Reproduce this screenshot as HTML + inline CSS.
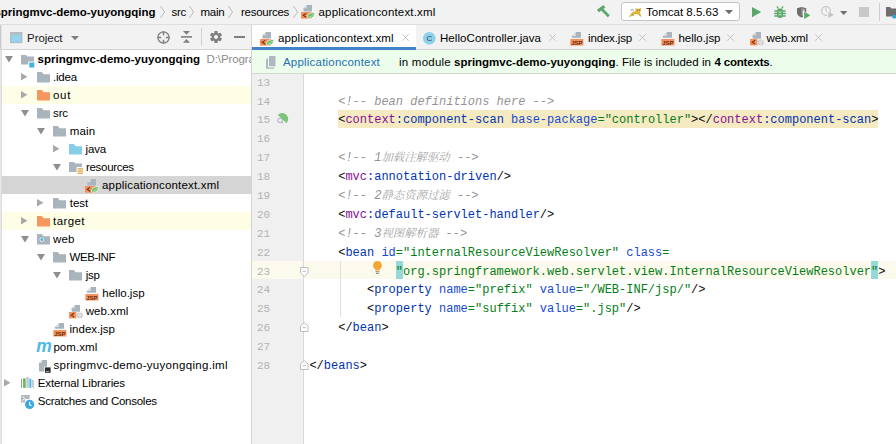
<!DOCTYPE html>
<html><head><meta charset="utf-8"><title>applicationcontext.xml</title>
<style>
*{box-sizing:border-box;margin:0;padding:0}
html,body{width:896px;height:444px;overflow:hidden;background:#fff}
body{font-family:"Liberation Sans","Noto Sans CJK SC",sans-serif;font-size:11.5px;color:#000;position:relative}
.a{position:absolute}
.t{position:absolute;white-space:nowrap;line-height:18px;height:18px}
svg{position:absolute;overflow:visible}
.code{font-family:"Liberation Mono","Noto Serif CJK SC",monospace;font-size:12px;line-height:18px;height:18px;white-space:pre;position:absolute;left:338.2px;color:#080808}
.ln{font-family:"Liberation Mono",monospace;font-size:11px;line-height:18px;height:18px;position:absolute;left:257px;color:#b3b3b3}
.c{color:#939393;font-style:italic}
.cj{font-size:11.4px;color:#a6a6a6}
.ns{color:#871094}
.tg{color:#0033b3}
.an{color:#174ad4}
.av{color:#067d17}
</style></head><body>
<div class="a" style="left:0px;top:0px;width:896px;height:24px;background:#f2f2f2;"></div>
<div class="a" style="left:0px;top:24px;width:896px;height:1px;background:#dedede;"></div>
<div class="a" style="left:0px;top:25px;width:251px;height:24px;background:#f2f2f2;"></div>
<div class="a" style="left:0px;top:49px;width:251px;height:1px;background:#d4d4d4;"></div>
<div class="a" style="left:0px;top:50px;width:251px;height:394px;background:#fff;"></div>
<div class="a" style="left:252px;top:25px;width:644px;height:25px;background:#f2f2f2;"></div>
<div class="a" style="left:252px;top:25px;width:164px;height:25px;background:#fff;"></div>
<div class="a" style="left:252px;top:47px;width:164px;height:3px;background:#4083c9;"></div>
<div class="a" style="left:416px;top:49px;width:480px;height:1px;background:#d2d2d2;"></div>
<div class="a" style="left:252px;top:50px;width:644px;height:23px;background:#edfdec;"></div>
<div class="a" style="left:252px;top:73px;width:644px;height:1px;background:#d6d6d6;"></div>
<div class="a" style="left:252px;top:74px;width:51px;height:370px;background:#f0f0f0;"></div>
<div class="a" style="left:303px;top:74px;width:1px;height:370px;background:#d9d9d9;"></div>
<div class="a" style="left:2px;top:86px;width:249px;height:18px;background:#fdfee5;"></div>
<div class="a" style="left:2px;top:212px;width:249px;height:18px;background:#fdfee5;"></div>
<div class="a" style="left:2px;top:176px;width:249px;height:18px;background:#d5d5d5;"></div>
<div class="a" style="left:0px;top:25px;width:1px;height:25px;background:#c9c9c9;"></div>
<div class="a" style="left:1px;top:25px;width:1px;height:25px;background:#e4e4e4;"></div>
<div class="a" style="left:0px;top:50px;width:1px;height:394px;background:#e7e7e7;"></div>
<div class="a" style="left:1px;top:50px;width:1px;height:394px;background:#dddddd;"></div>
<div class="a" style="left:251px;top:25px;width:1px;height:419px;background:#d4d4d4;"></div>
<div class="a" style="left:621.3px;top:2.3px;width:118.4px;height:19px;background:#fff;border:1px solid #c4c4c4;border-radius:3px"></div>
<div class="a" style="left:252px;top:260.6px;width:644px;height:18.9px;background:#fcfaed;"></div>
<div class="a" style="left:303px;top:260.6px;width:1px;height:18.9px;background:#d9d9d9;"></div>
<div class="a" style="left:338.2px;top:109.5px;width:540px;height:18.9px;background:#f5eac1;"></div>
<div class="a" style="left:395.6px;top:260.6px;width:7.3px;height:18.9px;background:#96d9d9;"></div>
<div class="a" style="left:870.8px;top:260.6px;width:7.3px;height:18.9px;background:#96d9d9;"></div>
<div class="a" style="left:340px;top:260.6px;width:1px;height:56.7px;background:#dedede;"></div>
<div class="t" style="left:-5.5px;top:2.5px;color:#000;letter-spacing:-0.026px;font-weight:bold;">springmvc-demo-yuyongqing</div>
<div class="t" style="left:171.5px;top:2.5px;color:#000;letter-spacing:-0.281px;">src</div>
<div class="t" style="left:200.5px;top:2.5px;color:#000;letter-spacing:-0.234px;">main</div>
<div class="t" style="left:241px;top:2.5px;color:#000;letter-spacing:-0.278px;">resources</div>
<div class="t" style="left:318.5px;top:2.5px;color:#000;letter-spacing:0.175px;">applicationcontext.xml</div>
<div class="t" style="left:646px;top:2.5px;color:#000;letter-spacing:0.005px;">Tomcat 8.5.63</div>
<div class="t" style="left:27px;top:28.5px;color:#1a1a1a;letter-spacing:-0.042px;">Project</div>
<div class="t" style="left:278px;top:28.5px;color:#000;letter-spacing:0.118px;">applicationcontext.xml</div>
<div class="t" style="left:440px;top:28.5px;color:#000;letter-spacing:0.064px;">HelloController.java</div>
<div class="t" style="left:588px;top:28.5px;color:#000;letter-spacing:-0.155px;">index.jsp</div>
<div class="t" style="left:678.5px;top:28.5px;color:#000;letter-spacing:-0.023px;">hello.jsp</div>
<div class="t" style="left:766.5px;top:28.5px;color:#000;letter-spacing:-0.098px;">web.xml</div>
<div class="t" style="left:283px;top:52.5px;color:#2470b3;letter-spacing:0.203px;">Applicationcontext</div>
<div class="t" style="left:399px;top:52.5px;color:#000;letter-spacing:0.236px;">in module</div>
<div class="t" style="left:454px;top:52.5px;color:#000;letter-spacing:-0.006px;font-weight:bold;">springmvc-demo-yuyongqing</div>
<div class="t" style="left:615.5px;top:52.5px;color:#000;letter-spacing:0.042px;">. File is included in</div>
<div class="t" style="left:714.5px;top:52.5px;color:#000;letter-spacing:-0.189px;font-weight:bold;">4 contexts</div>
<div class="t" style="left:769.5px;top:52.5px;color:#000;letter-spacing:0.297px;">.</div>
<div class="t" style="left:37.5px;top:49.5px;color:#000;letter-spacing:0.034px;font-weight:bold;">springmvc-demo-yuyongqing</div>
<div class="t" style="left:206.5px;top:49.5px;color:#8c8c8c;letter-spacing:-0.095px;width:44.5px;overflow:hidden;">D:\Programs</div>
<div class="t" style="left:53px;top:67.5px;color:#000;letter-spacing:-0.188px;">.idea</div>
<div class="t" style="left:53px;top:85.5px;color:#000;letter-spacing:0.667px;">out</div>
<div class="t" style="left:53px;top:103.5px;color:#000;letter-spacing:-0.115px;">src</div>
<div class="t" style="left:69.7px;top:121.5px;color:#000;letter-spacing:0.141px;">main</div>
<div class="t" style="left:85.5px;top:139.5px;color:#000;letter-spacing:-0.152px;">java</div>
<div class="t" style="left:86px;top:157.5px;color:#000;letter-spacing:-0.311px;">resources</div>
<div class="t" style="left:102px;top:175.5px;color:#000;letter-spacing:0.184px;">applicationcontext.xml</div>
<div class="t" style="left:69.7px;top:193.5px;color:#000;letter-spacing:0.013px;">test</div>
<div class="t" style="left:53px;top:211.5px;color:#000;letter-spacing:0.43px;">target</div>
<div class="t" style="left:53px;top:229.5px;color:#000;letter-spacing:0.164px;">web</div>
<div class="t" style="left:69.5px;top:247.5px;color:#000;letter-spacing:-0.438px;">WEB-INF</div>
<div class="t" style="left:85.7px;top:265.5px;color:#000;letter-spacing:-0.201px;">jsp</div>
<div class="t" style="left:102.3px;top:283.5px;color:#000;letter-spacing:0.011px;">hello.jsp</div>
<div class="t" style="left:85.7px;top:301.5px;color:#000;letter-spacing:0.087px;">web.xml</div>
<div class="t" style="left:69.5px;top:319.5px;color:#000;letter-spacing:0.012px;">index.jsp</div>
<div class="t" style="left:53.4px;top:337.5px;color:#000;letter-spacing:0.064px;">pom.xml</div>
<div class="t" style="left:53.4px;top:355.5px;color:#000;letter-spacing:0.305px;">springmvc-demo-yuyongqing.iml</div>
<div class="t" style="left:37.8px;top:373.5px;color:#000;letter-spacing:-0.127px;">External Libraries</div>
<div class="t" style="left:37.8px;top:391.5px;color:#000;letter-spacing:-0.257px;">Scratches and Consoles</div>
<svg style="left:159px;top:5px" width="7" height="14" viewBox="0 0 7 14"><path d="M1.5 1 L5.5 7 L1.5 13" fill="none" stroke="#bcbcbc" stroke-width="1"/></svg>
<svg style="left:188px;top:5px" width="7" height="14" viewBox="0 0 7 14"><path d="M1.5 1 L5.5 7 L1.5 13" fill="none" stroke="#bcbcbc" stroke-width="1"/></svg>
<svg style="left:227px;top:5px" width="7" height="14" viewBox="0 0 7 14"><path d="M1.5 1 L5.5 7 L1.5 13" fill="none" stroke="#bcbcbc" stroke-width="1"/></svg>
<svg style="left:291.5px;top:5px" width="7" height="14" viewBox="0 0 7 14"><path d="M1.5 1 L5.5 7 L1.5 13" fill="none" stroke="#bcbcbc" stroke-width="1"/></svg>
<svg style="left:4.5px;top:55.5px" width="8" height="6.5" viewBox="0 0 8 6.5"><path d="M0 0H8L4 6.5Z" fill="#8f8f8f"/></svg>
<svg style="left:20.8px;top:54.5px" width="14" height="13" viewBox="0 0 14 13"><path d="M0 0H5L6.5 1.5H13V6.5H7.3V9.5H0Z" fill="#a9b4bc"/><rect x="8.3" y="7.5" width="5" height="5" fill="#3fb3e3"/></svg>
<svg style="left:20.8px;top:73.3px" width="6.5" height="7.4" viewBox="0 0 6.5 7.4"><path d="M0 0L6.5 3.7L0 7.4Z" fill="#a8a8a8"/></svg>
<svg style="left:36.8px;top:71.80000000000001px" width="13" height="10.6" viewBox="0 0 13 10.6"><path d="M0 0H4.8L6.6 2.2H13V10.6H0Z" fill="#a9b4bc"/></svg>
<svg style="left:20.8px;top:91.3px" width="6.5" height="7.4" viewBox="0 0 6.5 7.4"><path d="M0 0L6.5 3.7L0 7.4Z" fill="#a8a8a8"/></svg>
<svg style="left:36.8px;top:89.80000000000001px" width="13" height="10.6" viewBox="0 0 13 10.6"><path d="M0 0H4.8L6.6 2.2H13V10.6H0Z" fill="#f5975f"/></svg>
<svg style="left:20.5px;top:109.5px" width="8" height="6.5" viewBox="0 0 8 6.5"><path d="M0 0H8L4 6.5Z" fill="#8f8f8f"/></svg>
<svg style="left:36.8px;top:107.80000000000001px" width="13" height="10.6" viewBox="0 0 13 10.6"><path d="M0 0H4.8L6.6 2.2H13V10.6H0Z" fill="#a9b4bc"/></svg>
<svg style="left:37px;top:127.5px" width="8" height="6.5" viewBox="0 0 8 6.5"><path d="M0 0H8L4 6.5Z" fill="#8f8f8f"/></svg>
<svg style="left:53px;top:125.80000000000001px" width="13" height="10.6" viewBox="0 0 13 10.6"><path d="M0 0H4.8L6.6 2.2H13V10.6H0Z" fill="#a9b4bc"/></svg>
<svg style="left:53.3px;top:145.3px" width="6.5" height="7.4" viewBox="0 0 6.5 7.4"><path d="M0 0L6.5 3.7L0 7.4Z" fill="#a8a8a8"/></svg>
<svg style="left:69px;top:143.6px" width="13" height="10.6" viewBox="0 0 13 10.6"><path d="M0 0H4.8L6.6 2.2H13V10.6H0Z" fill="#85cde9"/></svg>
<svg style="left:53px;top:163.5px" width="8" height="6.5" viewBox="0 0 8 6.5"><path d="M0 0H8L4 6.5Z" fill="#8f8f8f"/></svg>
<svg style="left:69px;top:162.4px" width="15" height="13" viewBox="0 0 15 13"><path d="M0 0H5L6.5 1.5H13V5H7.5V10H0Z" fill="#a9b4bc"/><rect x="8.5" y="6.2" width="5.6" height="1.4" fill="#e2a94c"/><rect x="8.5" y="8.4" width="5.6" height="1.4" fill="#e2a94c"/><rect x="8.5" y="10.6" width="5.6" height="1.4" fill="#e2a94c"/></svg>
<svg style="left:37.3px;top:199.3px" width="6.5" height="7.4" viewBox="0 0 6.5 7.4"><path d="M0 0L6.5 3.7L0 7.4Z" fill="#a8a8a8"/></svg>
<svg style="left:53px;top:197.8px" width="13" height="10.6" viewBox="0 0 13 10.6"><path d="M0 0H4.8L6.6 2.2H13V10.6H0Z" fill="#a9b4bc"/></svg>
<svg style="left:20.8px;top:217.3px" width="6.5" height="7.4" viewBox="0 0 6.5 7.4"><path d="M0 0L6.5 3.7L0 7.4Z" fill="#a8a8a8"/></svg>
<svg style="left:36.8px;top:215.8px" width="13" height="10.6" viewBox="0 0 13 10.6"><path d="M0 0H4.8L6.6 2.2H13V10.6H0Z" fill="#f5975f"/></svg>
<svg style="left:20.5px;top:235.5px" width="8" height="6.5" viewBox="0 0 8 6.5"><path d="M0 0H8L4 6.5Z" fill="#8f8f8f"/></svg>
<svg style="left:36.8px;top:233.8px" width="13" height="10.6" viewBox="0 0 13 10.6"><path d="M0 0H4.8L6.6 2.2H13V10.6H0Z" fill="#a9b4bc"/><circle cx="4.8" cy="5.6" r="2.2" fill="#fff"/><circle cx="4.8" cy="5.6" r="1.5" fill="#3fb3e3"/></svg>
<svg style="left:37px;top:253.5px" width="8" height="6.5" viewBox="0 0 8 6.5"><path d="M0 0H8L4 6.5Z" fill="#8f8f8f"/></svg>
<svg style="left:53px;top:251.8px" width="13" height="10.6" viewBox="0 0 13 10.6"><path d="M0 0H4.8L6.6 2.2H13V10.6H0Z" fill="#a9b4bc"/></svg>
<svg style="left:53px;top:271.5px" width="8" height="6.5" viewBox="0 0 8 6.5"><path d="M0 0H8L4 6.5Z" fill="#8f8f8f"/></svg>
<svg style="left:69px;top:269.79999999999995px" width="13" height="10.6" viewBox="0 0 13 10.6"><path d="M0 0H4.8L6.6 2.2H13V10.6H0Z" fill="#a9b4bc"/></svg>
<svg style="left:85.4px;top:179.3px" width="14" height="14" viewBox="0 0 14 14"><path d="M5.7 0H11V6.6H2.5V3.2Z" fill="#a9b4bc"/><path d="M2.5 3.2L5.7 0V3.2Z" fill="#fff" opacity=".55"/><path d="M2.5 3.2L5.7 0V3.2Z" fill="#a9b4bc" opacity=".0"/><rect x="0" y="7" width="10.6" height="6.6" fill="#f4915c"/><path d="M5.2 8.4L2.2 10.3L5.2 12.2" fill="none" stroke="#7a2a12" stroke-width="1.1"/><path d="M6.5 12.5C6 9.4 8.6 7.7 13.5 7.5C13.8 11.2 11.2 14 7.5 13.2Z" fill="#6cc067" stroke="#fff" stroke-width=".7"/><path d="M8 12C9.6 11.8 11.2 10.8 12.2 9.2" fill="none" stroke="#c9ecc4" stroke-width=".8"/></svg>
<svg style="left:85px;top:286.8px" width="14" height="13.5" viewBox="0 0 14 13.5"><path d="M5.9 0H11V5.7H1.9V4Z" fill="#a9b4bc"/><path d="M1.9 4L5.9 0V4Z" fill="#fff" opacity=".55"/><path d="M1.9 4L5.9 0V4Z" fill="#a9b4bc" opacity=".0"/><rect x="0.4" y="7" width="13" height="6.5" fill="#f4915c"/><text x="6.9" y="12.6" font-family="Liberation Sans,sans-serif" font-weight="bold" font-size="6" text-anchor="middle" fill="#6b2a10" textLength="11.4" lengthAdjust="spacingAndGlyphs">JSP</text></svg>
<svg style="left:69px;top:305.2px" width="14" height="14" viewBox="0 0 14 14"><path d="M5.9 0H11V6.8H2.7V3.2Z" fill="#a9b4bc"/><path d="M2.7 3.2L5.9 0V3.2Z" fill="#fff" opacity=".55"/><path d="M2.7 3.2L5.9 0V3.2Z" fill="#a9b4bc" opacity=".0"/><rect x="0" y="7" width="7.4" height="6.4" fill="#f4915c"/><path d="M5.2 8.3L2.2 10.2L5.2 12.1" fill="none" stroke="#7a2a12" stroke-width="1.1"/><circle cx="10.8" cy="10.4" r="2.9" fill="#b9c2c9"/><path d="M8.6 10.4H13M10.8 7.8V13" stroke="#e8ecef" stroke-width=".8" fill="none"/><ellipse cx="10.8" cy="10.4" rx="1.3" ry="2.7" fill="none" stroke="#e8ecef" stroke-width=".7"/></svg>
<svg style="left:53px;top:322.9px" width="14" height="13.5" viewBox="0 0 14 13.5"><path d="M5.9 0H11V5.7H1.9V4Z" fill="#a9b4bc"/><path d="M1.9 4L5.9 0V4Z" fill="#fff" opacity=".55"/><path d="M1.9 4L5.9 0V4Z" fill="#a9b4bc" opacity=".0"/><rect x="0.4" y="7" width="13" height="6.5" fill="#f4915c"/><text x="6.9" y="12.6" font-family="Liberation Sans,sans-serif" font-weight="bold" font-size="6" text-anchor="middle" fill="#6b2a10" textLength="11.4" lengthAdjust="spacingAndGlyphs">JSP</text></svg>
<div class="a" style="left:36.3px;top:337px;font:italic bold 17.5px/18px 'Liberation Sans',sans-serif;color:#4fb9e4;letter-spacing:-1px">m</div>
<svg style="left:39px;top:359.6px" width="12" height="13" viewBox="0 0 12 13"><path d="M3 0H8V11.4H0V3Z" fill="#a9b4bc"/><path d="M0 3L3 0V3Z" fill="#fff" opacity=".55"/><path d="M0 3L3 0V3Z" fill="#a9b4bc" opacity=".0"/><rect x="5.3" y="6.7" width="6.7" height="6.3" fill="#fff"/><rect x="6" y="7.4" width="5.6" height="5.4" fill="#2b2b2b"/><rect x="7" y="11" width="3" height=".9" fill="#bbb"/></svg>
<svg style="left:4px;top:379.3px" width="6.5" height="7.4" viewBox="0 0 6.5 7.4"><path d="M0 0L6.5 3.7L0 7.4Z" fill="#a8a8a8"/></svg>
<svg style="left:20.6px;top:377px" width="13" height="11" viewBox="0 0 13 11"><rect x="0" y="1.8" width="1" height="9" fill="#8f9aa3"/><rect x="2.1" y="1.4" width="2.5" height="9.4" fill="#62b543"/><rect x="5.4" y="0" width="2.3" height="10.8" fill="#bcc5cb"/><rect x="8.3" y="1.8" width="2.1" height="9" fill="#4db8e6"/><rect x="11.5" y="3" width="1" height="7.8" fill="#8f9aa3"/></svg>
<svg style="left:20.8px;top:395.2px" width="14" height="14" viewBox="0 0 14 14"><path d="M0 0H8.6V4H4V7.4H0Z" fill="#b0b9c0"/><path d="M1.4 1.4L3.8 3.5L1.4 5.6" fill="none" stroke="#fff" stroke-width="1"/><circle cx="8.6" cy="9.4" r="4.6" fill="#3ea8de"/><path d="M8.6 6.8V9.6L10.4 10.8" fill="none" stroke="#fff" stroke-width="1.1"/></svg>
<svg style="left:10px;top:32px" width="12.4" height="11.2" viewBox="0 0 12.4 11.2"><rect x="0" y="0" width="12.4" height="11.2" fill="#b3bdc5"/><rect x="1.5" y="3.2" width="9.4" height="6.6" fill="#93d4ee"/></svg>
<svg style="left:70.8px;top:36.4px" width="8" height="4.2" viewBox="0 0 8 4.2"><path d="M0 0H8L4 4.2Z" fill="#7f7f7f"/></svg>
<svg style="left:156.6px;top:30.6px" width="13" height="13" viewBox="0 0 13 13"><circle cx="6.5" cy="6.5" r="5.6" fill="none" stroke="#7f7f7f" stroke-width="1.3"/><path d="M6.5 0.5V4.2M6.5 8.8V12.5M0.5 6.5H4.2M8.8 6.5H12.5" stroke="#7f7f7f" stroke-width="1.6"/></svg>
<svg style="left:181px;top:31.2px" width="11" height="11.8" viewBox="0 0 11 11.8"><rect x="0" y="5.1" width="11" height="1.6" fill="#7f7f7f"/><path d="M2 0H9L5.5 3.8Z" fill="#7f7f7f"/><path d="M2 11.8H9L5.5 8Z" fill="#7f7f7f"/></svg>
<div class="a" style="left:201px;top:28px;width:1px;height:18px;background:#d1d1d1"></div>
<svg style="left:210px;top:31px" width="12" height="12" viewBox="0 0 12 12"><g transform="translate(6 6)" fill="#7f7f7f"><rect x="-1.6" y="-6" width="3.2" height="12" rx=".5" transform="rotate(0)"/><rect x="-1.6" y="-6" width="3.2" height="12" rx=".5" transform="rotate(60)"/><rect x="-1.6" y="-6" width="3.2" height="12" rx=".5" transform="rotate(120)"/><circle r="4.2"/><circle r="2.1" fill="#f2f2f2"/></g></svg>
<div class="a" style="left:233.7px;top:36.2px;width:11px;height:1.8px;background:#7f7f7f"></div>
<svg style="left:260px;top:31.8px" width="14" height="14" viewBox="0 0 14 14"><path d="M5.7 0H11V6.6H2.5V3.2Z" fill="#a9b4bc"/><path d="M2.5 3.2L5.7 0V3.2Z" fill="#fff" opacity=".55"/><path d="M2.5 3.2L5.7 0V3.2Z" fill="#a9b4bc" opacity=".0"/><rect x="0" y="7" width="10.6" height="6.6" fill="#f4915c"/><path d="M5.2 8.4L2.2 10.3L5.2 12.2" fill="none" stroke="#7a2a12" stroke-width="1.1"/><path d="M6.5 12.5C6 9.4 8.6 7.7 13.5 7.5C13.8 11.2 11.2 14 7.5 13.2Z" fill="#6cc067" stroke="#fff" stroke-width=".7"/><path d="M8 12C9.6 11.8 11.2 10.8 12.2 9.2" fill="none" stroke="#c9ecc4" stroke-width=".8"/></svg>
<svg style="left:423px;top:32px" width="12.6" height="12.6" viewBox="0 0 12.6 12.6"><circle cx="6.3" cy="6.3" r="6.3" fill="#8fd1ec"/><text x="6.3" y="9.2" font-family="Liberation Sans,sans-serif" font-size="8" text-anchor="middle" fill="#2b4a57">C</text></svg>
<svg style="left:569.5px;top:31.8px" width="14" height="13.5" viewBox="0 0 14 13.5"><path d="M5.9 0H11V5.7H1.9V4Z" fill="#a9b4bc"/><path d="M1.9 4L5.9 0V4Z" fill="#fff" opacity=".55"/><path d="M1.9 4L5.9 0V4Z" fill="#a9b4bc" opacity=".0"/><rect x="0.4" y="7" width="13" height="6.5" fill="#f4915c"/><text x="6.9" y="12.6" font-family="Liberation Sans,sans-serif" font-weight="bold" font-size="6" text-anchor="middle" fill="#6b2a10" textLength="11.4" lengthAdjust="spacingAndGlyphs">JSP</text></svg>
<svg style="left:661px;top:31.8px" width="14" height="13.5" viewBox="0 0 14 13.5"><path d="M5.9 0H11V5.7H1.9V4Z" fill="#a9b4bc"/><path d="M1.9 4L5.9 0V4Z" fill="#fff" opacity=".55"/><path d="M1.9 4L5.9 0V4Z" fill="#a9b4bc" opacity=".0"/><rect x="0.4" y="7" width="13" height="6.5" fill="#f4915c"/><text x="6.9" y="12.6" font-family="Liberation Sans,sans-serif" font-weight="bold" font-size="6" text-anchor="middle" fill="#6b2a10" textLength="11.4" lengthAdjust="spacingAndGlyphs">JSP</text></svg>
<svg style="left:749.5px;top:31.8px" width="14" height="14" viewBox="0 0 14 14"><path d="M5.9 0H11V6.8H2.7V3.2Z" fill="#a9b4bc"/><path d="M2.7 3.2L5.9 0V3.2Z" fill="#fff" opacity=".55"/><path d="M2.7 3.2L5.9 0V3.2Z" fill="#a9b4bc" opacity=".0"/><rect x="0" y="7" width="7.4" height="6.4" fill="#f4915c"/><path d="M5.2 8.3L2.2 10.2L5.2 12.1" fill="none" stroke="#7a2a12" stroke-width="1.1"/><circle cx="10.8" cy="10.4" r="2.9" fill="#b9c2c9"/><path d="M8.6 10.4H13M10.8 7.8V13" stroke="#e8ecef" stroke-width=".8" fill="none"/><ellipse cx="10.8" cy="10.4" rx="1.3" ry="2.7" fill="none" stroke="#e8ecef" stroke-width=".7"/></svg>
<svg style="left:401.5px;top:34px" width="7" height="7" viewBox="0 0 7 7"><path d="M0.3 0.3L6.7 6.7M6.7 0.3L0.3 6.7" stroke="#bdbdbd" stroke-width=".9" fill="none"/></svg>
<svg style="left:548.5px;top:34px" width="7" height="7" viewBox="0 0 7 7"><path d="M0.3 0.3L6.7 6.7M6.7 0.3L0.3 6.7" stroke="#bdbdbd" stroke-width=".9" fill="none"/></svg>
<svg style="left:639px;top:34px" width="7" height="7" viewBox="0 0 7 7"><path d="M0.3 0.3L6.7 6.7M6.7 0.3L0.3 6.7" stroke="#bdbdbd" stroke-width=".9" fill="none"/></svg>
<svg style="left:727.2px;top:34px" width="7" height="7" viewBox="0 0 7 7"><path d="M0.3 0.3L6.7 6.7M6.7 0.3L0.3 6.7" stroke="#bdbdbd" stroke-width=".9" fill="none"/></svg>
<svg style="left:815.3px;top:34px" width="7" height="7" viewBox="0 0 7 7"><path d="M0.3 0.3L6.7 6.7M6.7 0.3L0.3 6.7" stroke="#bdbdbd" stroke-width=".9" fill="none"/></svg>
<svg style="left:265.5px;top:55.5px" width="11" height="13" viewBox="0 0 11 13"><path d="M3 0H9.5V10.5H3Z" fill="#aeb8c0"/><path d="M0 3.8L1.8 2H2.2V11.2H8V12.8H0Z" fill="#aeb8c0"/><path d="M2.2 2H3V10.5H8V11.2H2.2Z" fill="#edfdec"/></svg>
<svg style="left:300.5px;top:5.4px" width="14" height="14" viewBox="0 0 14 14"><path d="M5.7 0H11V6.6H2.5V3.2Z" fill="#a9b4bc"/><path d="M2.5 3.2L5.7 0V3.2Z" fill="#fff" opacity=".55"/><path d="M2.5 3.2L5.7 0V3.2Z" fill="#a9b4bc" opacity=".0"/><rect x="0" y="7" width="10.6" height="6.6" fill="#f4915c"/><path d="M5.2 8.4L2.2 10.3L5.2 12.2" fill="none" stroke="#7a2a12" stroke-width="1.1"/><path d="M6.5 12.5C6 9.4 8.6 7.7 13.5 7.5C13.8 11.2 11.2 14 7.5 13.2Z" fill="#6cc067" stroke="#fff" stroke-width=".7"/><path d="M8 12C9.6 11.8 11.2 10.8 12.2 9.2" fill="none" stroke="#c9ecc4" stroke-width=".8"/></svg>
<svg style="left:597px;top:5px" width="14" height="13" viewBox="0 0 14 13"><path d="M0.9 6L7.4 1.2" stroke="#59a869" stroke-width="3.2" fill="none"/><path d="M4.6 4L11.8 11.2" stroke="#59a869" stroke-width="2.7" fill="none"/></svg>
<svg style="left:628.6px;top:6.6px" width="13" height="11" viewBox="0 0 13 11"><path d="M1.6 3.6C2.6 2 4.4 2.4 4.6 4.2" fill="none" stroke="#b9b9b9" stroke-width="1.3"/><path d="M6.6 0.6L7.8 1.8H10.4L11.8 0.4L12 3.4L10.8 5.4L12.4 9.2L11.6 9.8L8.4 7L4.4 7.6L1.2 10L0.2 9.4L2.6 5.8L6.6 4Z" fill="#dcb53a"/><path d="M8 3H8.8M10 3H10.8M3.6 7.4L4.4 9" stroke="#5a4a1a" stroke-width=".8" fill="none"/></svg>
<svg style="left:725.4px;top:10.4px" width="8" height="4.2" viewBox="0 0 8 4.2"><path d="M0 0H8L4 4.2Z" fill="#6e6e6e"/></svg>
<svg style="left:752.2px;top:7px" width="9.2" height="10.2" viewBox="0 0 9.2 10.2"><path d="M0 0L9.2 5.1L0 10.2Z" fill="#59a869"/></svg>
<svg style="left:773.6px;top:5.8px" width="12" height="12.2" viewBox="0 0 12 12.2"><g fill="#59a869" stroke="none"><rect x="3" y="2.6" width="6" height="9.4" rx="2.8"/></g><g stroke="#59a869" stroke-width="1.5" fill="none"><path d="M0.4 4.9H3.4M8.6 4.9H11.6M0.2 7.5H3.4M8.6 7.5H11.8M0.4 10.1H3.4M8.6 10.1H11.6"/><path d="M4.4 2.6L3 0.4M7.6 2.6L9 0.4" stroke-width="1.2"/></g><path d="M4.4 6.1H7.6M4.4 8.8H7.6" stroke="#d9eedd" stroke-width="1"/></svg>
<svg style="left:796.6px;top:6.5px" width="14" height="12.4" viewBox="0 0 14 12.4"><path d="M0 1.2L4.6 0L9.2 1.2V5.8C9.2 8.4 6.8 9.8 4.6 10.4C2.4 9.8 0 8.4 0 5.8Z" fill="#6e6e6e"/><path d="M4.6 1.3L8 2.1V5.8C8 7.4 6.4 8.6 4.6 9.2Z" fill="#a6a6a6"/><path d="M6 3.4L14 8.2L6 12.6Z" fill="#f2f2f2"/><path d="M7.2 4.7L13.4 8.3L7.2 12Z" fill="#59a869"/></svg>
<svg style="left:821.4px;top:6px" width="14" height="12.4" viewBox="0 0 14 12.4"><circle cx="5" cy="5" r="4.4" fill="none" stroke="#c4c4c4" stroke-width="1.1"/><path d="M5 2.2V5.2L7 6.4" fill="none" stroke="#c4c4c4" stroke-width="1"/><path d="M6.2 4.6L13.6 8.6L6.2 12.4Z" fill="#f2f2f2"/><path d="M7.4 5.8L13 8.8L7.4 12Z" fill="#c4c4c4"/></svg>
<svg style="left:840.2px;top:10.6px" width="7.4" height="4" viewBox="0 0 7.4 4"><path d="M0 0H7.4L3.7 4Z" fill="#6e6e6e"/></svg>
<div class="a" style="left:859px;top:7.2px;width:9.6px;height:9.4px;background:#c8c8c8"></div>
<div class="a" style="left:878.6px;top:3px;width:1px;height:18px;background:#cdcdcd"></div>
<svg style="left:886px;top:7.2px" width="12" height="11" viewBox="0 0 12 11"><path d="M0 0H4L5.4 1.6H12V9.4H0Z" fill="#6e6e6e"/><rect x="6.4" y="8" width="4" height="3.4" fill="#389fd6"/></svg>
<svg style="left:276.5px;top:113.3px" width="11.5" height="11" viewBox="0 0 11.5 11"><path d="M0.9 1.9A5.9 5.9 0 0 1 9.5 10.3Z" fill="#7cc47a"/><circle cx="3.1" cy="7.4" r="2.3" fill="#f0f0f0" stroke="#a0aab8" stroke-width="1"/><path d="M4.7 9L6.3 10.6" stroke="#a0aab8" stroke-width="1"/></svg>
<svg style="left:299.8px;top:266.6px" width="8.6" height="10" viewBox="0 0 8.6 10"><path d="M0.5 0.5H8.1V6L4.3 9.3L0.5 6Z" fill="#fff" stroke="#bdbdbd" stroke-width="1"/><path d="M2.5 4.3H6.1" stroke="#bdbdbd" stroke-width="1"/></svg>
<svg style="left:299.8px;top:322px" width="8.6" height="10" viewBox="0 0 8.6 10"><path d="M0.5 9.5H8.1V4L4.3 0.7L0.5 4Z" fill="#fff" stroke="#bdbdbd" stroke-width="1"/><path d="M2.5 5.7H6.1" stroke="#bdbdbd" stroke-width="1"/></svg>
<svg style="left:299.8px;top:359.8px" width="8.6" height="10" viewBox="0 0 8.6 10"><path d="M0.5 9.5H8.1V4L4.3 0.7L0.5 4Z" fill="#fff" stroke="#bdbdbd" stroke-width="1"/><path d="M2.5 5.7H6.1" stroke="#bdbdbd" stroke-width="1"/></svg>
<svg style="left:372.8px;top:260.6px" width="9" height="13.4" viewBox="0 0 9 13.4"><path d="M4.5 0A4.4 4.4 0 0 1 7 8L6.6 9.4H2.4L2 8A4.4 4.4 0 0 1 4.5 0Z" fill="#f2a633"/><rect x="2.5" y="10.2" width="4" height="1.1" fill="#8a8a8a"/><rect x="3" y="11.9" width="3" height="1" fill="#8a8a8a"/></svg>
<div class="ln" style="top:74.07px">13</div>
<div class="ln" style="top:93.07px">14</div>
<div class="ln" style="top:111.07px">15</div>
<div class="ln" style="top:130.07px">16</div>
<div class="ln" style="top:149.07px">17</div>
<div class="ln" style="top:168.07px">18</div>
<div class="ln" style="top:187.07px">19</div>
<div class="ln" style="top:206.07px">20</div>
<div class="ln" style="top:225.07px">21</div>
<div class="ln" style="top:244.07px">22</div>
<div class="ln" style="top:263.07px">23</div>
<div class="ln" style="top:281.07px">24</div>
<div class="ln" style="top:300.07px">25</div>
<div class="ln" style="top:319.07px">26</div>
<div class="ln" style="top:338.07px">27</div>
<div class="ln" style="top:357.07px">28</div>
<div class="code" style="top:92.80px"><span class="c">&lt;!-- bean definitions here --&gt;</span></div>
<div class="code" style="top:110.80px">&lt;<span class="ns">context</span><span class="tg">:component-scan</span> <span class="an">base-package</span><span class="av">="controller"</span>&gt;&lt;/<span class="ns">context</span><span class="tg">:component-scan</span>&gt;</div>
<div class="code" style="top:148.80px"><span class="c">&lt;!-- 1<span class="cj">加载注解驱动</span> --&gt;</span></div>
<div class="code" style="top:167.80px">&lt;<span class="ns">mvc</span><span class="tg">:annotation-driven</span>/&gt;</div>
<div class="code" style="top:186.80px"><span class="c">&lt;!-- 2<span class="cj">静态资源过滤</span> --&gt;</span></div>
<div class="code" style="top:205.80px">&lt;<span class="ns">mvc</span><span class="tg">:default-servlet-handler</span>/&gt;</div>
<div class="code" style="top:224.80px"><span class="c">&lt;!-- 3<span class="cj">视图解析器</span> --&gt;</span></div>
<div class="code" style="top:243.80px">&lt;<span class="tg">bean</span> <span class="an">id</span><span class="av">="internalResourceViewResolver"</span> <span class="an">class</span><span class="av">=</span></div>
<div class="code" style="top:262.80px">        <span class="av">"org.springframework.web.servlet.view.InternalResourceViewResolver"</span>&gt;</div>
<div class="code" style="top:280.80px">    &lt;<span class="tg">property</span> <span class="an">name</span><span class="av">="prefix"</span> <span class="an">value</span><span class="av">="/WEB-INF/jsp/"</span>/&gt;</div>
<div class="code" style="top:299.80px">    &lt;<span class="tg">property</span> <span class="an">name</span><span class="av">="suffix"</span> <span class="an">value</span><span class="av">=".jsp"</span>/&gt;</div>
<div class="code" style="top:318.80px">&lt;/<span class="tg">bean</span>&gt;</div>
<div class="code" style="top:356.80px;left:309.4px">&lt;/<span class="tg">beans</span>&gt;</div>
</body></html>
